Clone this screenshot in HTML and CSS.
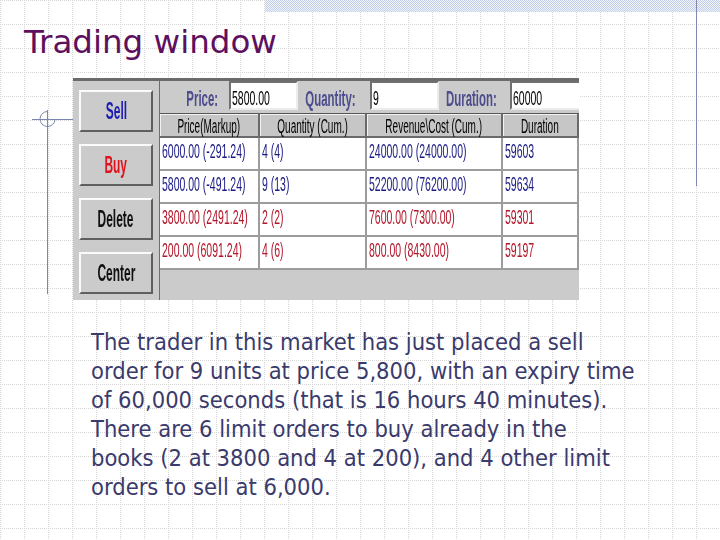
FILE: index.html
```html
<!DOCTYPE html>
<html lang="en">
<head>
  <meta charset="UTF-8">
  <meta name="viewport" content="width=device-width, initial-scale=1.0">
  <title>Trading window</title>

  <link rel="stylesheet" href="styles.css">
</head>
<body>
  <div class="slide">
    <div class="band"></div>
    <div class="rule"></div>
    <svg class="mark" width="80" height="300" viewBox="0 0 80 300">
      <path d="M47.5 110 V294 M32 119.5 H73" stroke="#7b86b0" stroke-width="1" fill="none"/>
      <path d="M47.5 111.5 A7.5 7.5 0 1 0 55 119.5" stroke="#7b86b0" stroke-width="1" fill="none"/>
    </svg>

    <h1 class="title">Trading window</h1>

    <div class="trader">
      <div class="actions">
        <div class="btn sell"><span class="sq">Sell</span></div>
        <div class="btn buy"><span class="sq">Buy</span></div>
        <div class="btn plain"><span class="sq">Delete</span></div>
        <div class="btn plain"><span class="sq">Center</span></div>
      </div>

      <div class="market">
        <div class="order-bar">
          <div class="field-label price"><span class="sq">Price:</span></div>
          <div class="field"><span class="sq">5800.00</span></div>
          <div class="field-label qty"><span class="sq">Quantity:</span></div>
          <div class="field"><span class="sq">9</span></div>
          <div class="field-label dur"><span class="sq">Duration:</span></div>
          <div class="field last"><span class="sq">60000</span></div>
        </div>

        <div class="book">
          <div class="head"><span class="sq">Price(Markup)</span></div>
          <div class="head"><span class="sq">Quantity (Cum.)</span></div>
          <div class="head"><span class="sq">Revenue\Cost (Cum.)</span></div>
          <div class="head"><span class="sq">Duration</span></div>

          <div class="cell ask"><span class="sq">6000.00 (-291.24)</span></div>
          <div class="cell ask"><span class="sq">4 (4)</span></div>
          <div class="cell ask"><span class="sq">24000.00 (24000.00)</span></div>
          <div class="cell ask"><span class="sq">59603</span></div>

          <div class="cell ask"><span class="sq">5800.00 (-491.24)</span></div>
          <div class="cell ask"><span class="sq">9 (13)</span></div>
          <div class="cell ask"><span class="sq">52200.00 (76200.00)</span></div>
          <div class="cell ask"><span class="sq">59634</span></div>

          <div class="cell bid"><span class="sq">3800.00 (2491.24)</span></div>
          <div class="cell bid"><span class="sq">2 (2)</span></div>
          <div class="cell bid"><span class="sq">7600.00 (7300.00)</span></div>
          <div class="cell bid"><span class="sq">59301</span></div>

          <div class="cell bid"><span class="sq">200.00 (6091.24)</span></div>
          <div class="cell bid"><span class="sq">4 (6)</span></div>
          <div class="cell bid"><span class="sq">800.00 (8430.00)</span></div>
          <div class="cell bid"><span class="sq">59197</span></div>
        </div>
      </div>
    </div>

    <p class="note">
      The trader in this market has just placed a sell<br>
      order for 9 units at price 5,800, with an expiry time<br>
      of 60,000 seconds (that is 16 hours 40 minutes).<br>
      There are 6 limit orders to buy already in the<br>
      books (2 at 3800 and 4 at 200), and 4 other limit<br>
      orders to sell at 6,000.
    </p>
  </div>
</body>
</html>
```

FILE: styles.css
```css
* {
  box-sizing: border-box;
}

html, body {
  width: 720px;
  height: 540px;
  margin: 0;
  padding: 0;
  overflow: hidden;
}

body {
  font-family: 'DejaVu Sans', sans-serif;
  background-color: #fff;
}

.slide {
  position: relative;
  z-index: 0;
  width: 720px;
  height: 540px;
  padding-top: 22px;
}

/* dotted 24px grid behind the slide */
.slide::before,
.slide::after {
  content: "";
  position: absolute;
  inset: 0;
  z-index: -1;
  pointer-events: none;
}

.slide::before {
  background: repeating-linear-gradient(to bottom, #d6d6d6 0 1px, transparent 1px 24px);
  -webkit-mask-image: repeating-linear-gradient(to right, #000 0 1px, transparent 1px 2px);
  mask-image: repeating-linear-gradient(to right, #000 0 1px, transparent 1px 2px);
}

.slide::after {
  background: repeating-linear-gradient(to right, #d6d6d6 0 1px, transparent 1px 24px);
  -webkit-mask-image: repeating-linear-gradient(to bottom, #000 0 1px, transparent 1px 2px);
  mask-image: repeating-linear-gradient(to bottom, #000 0 1px, transparent 1px 2px);
}

.band {
  position: absolute;
  top: 0;
  left: 265px;
  right: 0;
  height: 12px;
  background: repeating-conic-gradient(#c2cde6 0 25%, #f1f4fa 0 50%) 0 0 / 2px 2px;
}

.rule {
  position: absolute;
  top: 0;
  left: 696px;
  width: 1px;
  height: 186px;
  background-color: #7f89b1;
}

.mark {
  position: absolute;
  top: 0;
  left: 0;
}

.title {
  margin: 0 0 0 24px;
  font-size: 32.5px;
  font-weight: normal;
  line-height: 40px;
  color: #5e0f5e;
}

/* squeezed screenshot text */
.sq {
  display: inline-block;
  white-space: nowrap;
  transform: scaleX(.5);
  transform-origin: left center;
}

.trader {
  display: grid;
  grid-template-columns: 86px 420px;
  width: 506px;
  height: 222px;
  margin: 16px 0 0 73px;
  border-top: 3px solid #6b6b6b;
  background-color: #cbcbcb;
  font-family: 'Liberation Sans', Arial, sans-serif;
}

.actions {
  display: flex;
  flex-direction: column;
  gap: 12px;
  padding: 9px 6px 0;
}

.btn {
  height: 42px;
  display: flex;
  align-items: center;
  justify-content: center;
  border: 2px solid;
  border-color: #fbfbfb #5f5f5f #5f5f5f #fbfbfb;
  font-size: 23px;
  font-weight: bold;
}

.btn .sq {
  transform: scaleX(.52);
  transform-origin: center;
}

.sell { color: #1c1cb4; }
.buy { color: #e0141e; }
.plain { color: #111; }

.market {
  display: flex;
  flex-direction: column;
  border-left: 1px solid #6e6e6e;
}

.order-bar {
  display: grid;
  grid-template-columns: 69px 69px 72px 69px 71px 69px;
  height: 32px;
}

.field-label {
  display: flex;
  justify-content: flex-end;
  align-items: center;
  padding-top: 4px;
  font-size: 22px;
  font-weight: bold;
  color: #4c4c8e;
}

.field-label .sq {
  transform: scaleX(.52);
  transform-origin: right center;
}

.price { padding-right: 11px; }
.qty { padding-right: 14px; }
.dur { padding-right: 13px; }

.field {
  height: 29px;
  display: flex;
  align-items: center;
  padding: 4px 0 0 1px;
  background-color: #fff;
  border: 2px solid;
  border-color: #707070 #ededed #ededed #707070;
  font-size: 21px;
  color: #000;
}

.field.last {
  border-right: none;
}

.book {
  display: grid;
  grid-template-columns: 100px 107px 136px 76px;
}

.head {
  height: 25px;
  display: flex;
  justify-content: center;
  align-items: flex-end;
  background-color: #c6c6c6;
  border-top: 1px solid #555;
  border-right: 2px solid #6a6a6a;
  border-bottom: 2px solid #6a6a6a;
  box-shadow: inset 1px 1px 0 #f2f2f2;
  font-size: 20px;
  line-height: 20px;
  color: #000;
}

.head .sq {
  transform-origin: center;
}

.cell {
  height: 33px;
  padding: 2px 0 0 2px;
  background-color: #fff;
  border-right: 2px solid #9c9c9c;
  border-bottom: 2px solid #9c9c9c;
  font-size: 21px;
  line-height: 21px;
}

.ask { color: #1a1a84; }
.bid { color: #b3162a; }

.note {
  margin: 28px 0 0 91px;
  font-family: 'DejaVu Sans Condensed', 'DejaVu Sans', sans-serif;
  font-stretch: condensed;
  font-size: 23.5px;
  line-height: 29px;
  color: #3a3a6c;
}
```
